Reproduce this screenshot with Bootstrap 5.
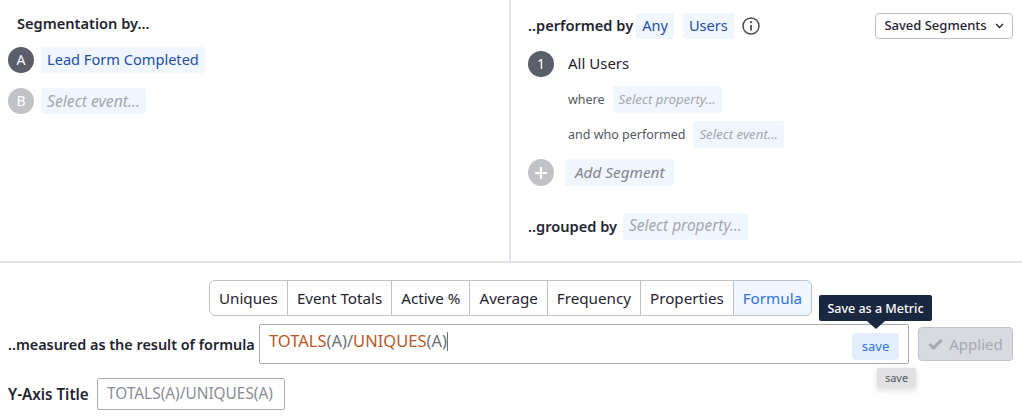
<!doctype html>
<html lang="en">
<head>
<meta charset="utf-8">
<title>Segmentation</title>
<link rel="stylesheet" href="https://cdn.jsdelivr.net/npm/bootstrap@5.3.0/dist/css/bootstrap.min.css">
<style>
html,body{height:416px;overflow:hidden;background:#fff}
body{font-family:"Noto Sans","Open Sans",sans-serif;font-size:15px;color:#1f2430;line-height:1.2}
.top-zone{height:263px;border-bottom:2px solid #e1e3e9}
.left-pane{width:511px;border-right:2px solid #e1e3e9;padding:15px 0 0 8px}
.right-pane{width:511px;padding:13px 9px 0 17px}
.sect-title{font-weight:600;font-size:14.6px;white-space:nowrap}
.seg-title{padding-left:9px;margin-bottom:12px;height:20px}
.dot{width:26px;height:26px;border-radius:50%;background:#5a5e69;color:#fff;font-size:14px;flex:none}
.dot-off{background:#c0c2c8}
.dot-tight{margin-right:-1px}
.chip{background:#f0f6fe;color:#1f4fa3;border-radius:3px;height:26px;padding:0 6px;white-space:nowrap;font-size:14.6px}
.chip-empty{color:#a3a6ae;font-style:italic;font-size:15.7px}
.chip-small{font-size:13.25px;height:27px}
.chip-add{color:#81848d;height:27px;padding:0 10px;font-size:15.3px;margin-left:11px}
.chip-group{font-size:15.4px;height:27px}
.chip-any{margin-left:3px}
.chip-users{margin-left:9px}
.row-a{margin-bottom:15px}
.row-all{height:26px;margin-top:12px}
.all-users{margin-left:14px;margin-top:-2px}
.sub-label{font-size:12.5px;color:#55585f}
.where-row{margin-left:40px;height:27px;margin-top:9px}
.where-row+.where-row{margin-top:8px}
.add-row{margin-top:11px}
.add-dot{height:27px}
.group-row{margin-top:27px;gap:6px}
.saved-btn{height:26px;width:138px;border:1px solid #bfc1c7;border-radius:4px;background:#fff;font-size:13px;font-weight:500;color:#1f2430;padding:0}
.metric-bar{padding-top:17px;padding-right:1px}
.metric-group .btn{font-size:15.2px;color:#1f2430;background:#fff;border-color:#bfc1c7;padding:0 9px;height:36px;line-height:34px}
.metric-group .btn.picked{background:#f0f6fe;color:#2f74d8}
.formula-row{padding:8px 9px 0 8px;position:relative}
.formula-box{width:650px;height:40px;border:1px solid #a9abb2;border-radius:2px;padding:6px 9px 0;font-size:16.5px;color:#6d7079;position:relative;white-space:nowrap}
.fn{color:#b65a1f}
.caret-mark{display:inline-block;width:1px;height:19px;background:#6d7079;vertical-align:-4px}
.save-btn{position:absolute;right:9px;top:8px;width:47px;height:27px;background:#e3eefc;color:#2f74d8;border-radius:4px;font-size:13px}
.applied-btn{width:95px;height:34px;background:#d9dae0;border:1px solid #c2c4cb;border-radius:4px;color:#a6a8b0;font-size:15px;margin-left:9px;padding:0;gap:6px}
.hint-tip{position:absolute;left:819px;top:-21px;width:113px;height:26px;background:#1a2740;color:#fff;border-radius:2px;font-size:12.5px;font-weight:500}
.hint-tip::after{content:"";position:absolute;left:48px;top:26px;border:9px solid transparent;border-top:8px solid #1a2740;border-bottom:0}
.ghost-tag{position:absolute;left:877px;top:52px;width:39px;height:20px;background:#e1e1e3;border-radius:2px;color:#55585f;font-size:11px;box-shadow:0 2px 6px rgba(0,0,0,.15)}
.axis-row{padding:14px 0 0 8px}
.axis-label{width:89px;flex:none;font-size:15.2px;padding-top:1px}
.axis-input{width:188px;height:32px;border:1px solid #a9abb2;border-radius:2px;padding:1px 9px 0;color:#8a8d96;font-size:15.4px;white-space:nowrap}
.measure-label{width:251px;flex:none;font-size:14.4px;padding-top:1px}
</style>
</head>
<body>
<div class="top-zone d-flex">
  <div class="left-pane">
    <div class="sect-title seg-title">Segmentation by...</div>
    <div class="d-flex align-items-center gap-2 row-a">
      <div class="dot dot-tight d-flex align-items-center justify-content-center">A</div>
      <div class="chip d-flex align-items-center">Lead Form Completed</div>
    </div>
    <div class="d-flex align-items-center gap-2">
      <div class="dot dot-off dot-tight d-flex align-items-center justify-content-center">B</div>
      <div class="chip chip-empty d-flex align-items-center">Select event...</div>
    </div>
  </div>
  <div class="right-pane">
    <div class="d-flex align-items-center">
      <div class="sect-title">..performed by</div>
      <div class="chip chip-any d-flex align-items-center">Any</div>
      <div class="chip chip-users d-flex align-items-center">Users</div>
      <svg class="ms-2" width="18" height="18" viewBox="0 0 18 18" fill="none" stroke="#4c4f57"><circle cx="9" cy="9" r="8" stroke-width="1.5"/><path d="M9 8v5.5" stroke-width="1.8"/><circle cx="9" cy="5.2" r="1.1" fill="#4c4f57" stroke="none"/></svg>
      <button class="saved-btn ms-auto d-flex align-items-center justify-content-center gap-2" type="button">Saved Segments
        <svg width="9" height="6" viewBox="0 0 9 6" fill="none" stroke="#1f2430" stroke-width="1.3"><path d="M1 1l3.5 3.5L8 1"/></svg>
      </button>
    </div>
    <div class="d-flex align-items-center row-all">
      <div class="dot d-flex align-items-center justify-content-center">1</div>
      <div class="all-users">All Users</div>
    </div>
    <div class="where-row d-flex align-items-center gap-2">
      <div class="sub-label">where</div>
      <div class="chip chip-empty chip-small d-flex align-items-center">Select property...</div>
    </div>
    <div class="where-row d-flex align-items-center gap-2">
      <div class="sub-label">and who performed</div>
      <div class="chip chip-empty chip-small d-flex align-items-center">Select event...</div>
    </div>
    <div class="d-flex align-items-center add-row">
      <div class="dot dot-off add-dot d-flex align-items-center justify-content-center">
        <svg width="14" height="14" viewBox="0 0 14 14" stroke="#fff" stroke-width="2.2"><path d="M7 1v12M1 7h12"/></svg>
      </div>
      <div class="chip chip-empty chip-add d-flex align-items-center">Add Segment</div>
    </div>
    <div class="d-flex align-items-center group-row">
      <div class="sect-title">..grouped by</div>
      <div class="chip chip-empty chip-group d-flex align-items-center">Select property...</div>
    </div>
  </div>
</div>
<div class="metric-bar d-flex justify-content-center">
  <div class="btn-group metric-group" role="group">
    <button type="button" class="btn">Uniques</button>
    <button type="button" class="btn">Event Totals</button>
    <button type="button" class="btn">Active %</button>
    <button type="button" class="btn">Average</button>
    <button type="button" class="btn">Frequency</button>
    <button type="button" class="btn">Properties</button>
    <button type="button" class="btn picked">Formula</button>
  </div>
</div>
<div class="formula-row d-flex align-items-center">
  <div class="sect-title measure-label">..measured as the result of formula</div>
  <div class="formula-box">
    <span class="fn">TOTALS</span>(A)/<span class="fn">UNIQUES</span>(A)<span class="caret-mark"></span>
    <div class="save-btn d-flex align-items-center justify-content-center">save</div>
  </div>
  <button class="applied-btn d-flex align-items-center justify-content-center" type="button" disabled>
    <svg width="15" height="12" viewBox="0 0 15 12" fill="none" stroke="#a6a8b0" stroke-width="3"><path d="M1.5 6l4 4L13.5 2"/></svg>Applied
  </button>
  <div class="hint-tip d-flex align-items-center justify-content-center">Save as a Metric</div>
  <div class="ghost-tag d-flex align-items-center justify-content-center">save</div>
</div>
<div class="axis-row d-flex align-items-center">
  <div class="sect-title axis-label">Y-Axis Title</div>
  <div class="axis-input d-flex align-items-center">TOTALS(A)/UNIQUES(A)</div>
</div>
</body>
</html>
